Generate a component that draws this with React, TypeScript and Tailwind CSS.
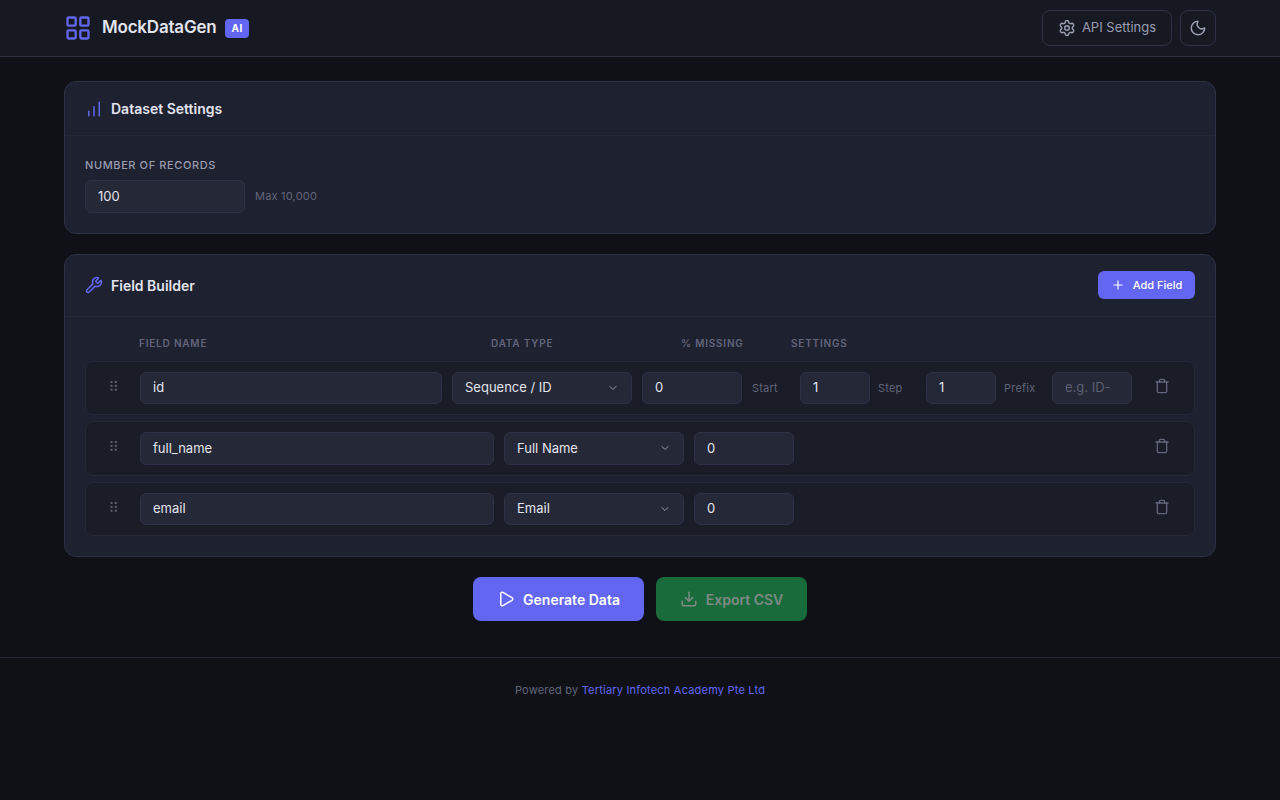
import { ChartNoAxesColumnIncreasing, ChevronDown, Download, LayoutGrid, Moon, Play, Plus, Settings, Trash, Wrench } from "lucide-react";

const inputCls =
  "h-[32.5px] rounded-[6px] border border-[#2e3145] bg-[#252836] px-3 text-[13px] text-[#e2e4ee] flex items-center";

const GripDots = () => (
  <svg width="8" height="10" viewBox="0 0 8 10" className="fill-[#5c5f70]">
    <rect x="0.5" y="0" width="2" height="2" />
    <rect x="4.8" y="0" width="2" height="2" />
    <rect x="0.5" y="3.9" width="2" height="2" />
    <rect x="4.8" y="3.9" width="2" height="2" />
    <rect x="0.5" y="7.8" width="2" height="2" />
    <rect x="4.8" y="7.8" width="2" height="2" />
  </svg>
);

const Setting = ({ label, value, placeholder, width }: { label: string; value?: string; placeholder?: string; width: string }) => (
  <div className="flex items-center gap-2">
    <span className="w-10 shrink-0 text-[11px] tracking-[0.2px] text-[#62657a]">{label}</span>
    <div className={`${inputCls} ${width} shrink-0`}>
      {value ?? <span className="text-[#5c5f70]">{placeholder}</span>}
    </div>
  </div>
);

const FieldRow = ({ name, type, settings }: { name: string; type: string; settings?: boolean }) => (
  <div className="flex items-center gap-[10px] rounded-[8px] border border-[#252836] bg-[#1a1c27] px-3 py-[10px]">
    <div className="flex w-8 shrink-0 -translate-y-[2px] justify-center">
      <GripDots />
    </div>
    <div className={`${inputCls} min-w-0 flex-1`}>{name}</div>
    <div className={`${inputCls} w-[180px] shrink-0 justify-between`}>
      {type}
      <ChevronDown size={12} className="text-[#9a9db0]" />
    </div>
    <div className={`${inputCls} w-[100px] shrink-0`}>0</div>
    <div className="flex flex-1 items-center gap-2">
      {settings && (
        <>
          <Setting label="Start" value="1" width="w-[70px]" />
          <Setting label="Step" value="1" width="w-[70px]" />
          <Setting label="Prefix" placeholder="e.g. ID-" width="w-20" />
        </>
      )}
    </div>
    <div className="flex w-10 shrink-0 -translate-y-[2px] justify-center">
      <Trash size={16} className="text-[#62657a]" />
    </div>
  </div>
);

export default function App() {
  return (
    <div className="flex min-h-[800px] flex-col bg-[#0f1117] font-['Inter',sans-serif] text-[#e2e4ee]">
      <header className="h-[57px] border-b border-[#2e3145] bg-[#161922]">
        <div className="mx-auto flex h-14 max-w-[1152px] items-center justify-between">
          <div className="flex items-center gap-[10px]">
            <LayoutGrid size={28} className="text-[#6366f1]" />
            <span className="text-[17px] font-semibold tracking-[-0.2px]">MockDataGen</span>
            <span className="ml-[-1px] rounded-[4px] bg-[#6366f1] px-[6px] py-[2px] text-[10px] font-bold tracking-[0.5px] text-white">AI</span>
          </div>
          <div className="flex items-center gap-2">
            <button className="flex h-9 w-[130px] items-center justify-center gap-[6px] rounded-[8px] border border-[#2e3145] text-[13px] text-[#9a9db0]">
              <Settings size={18} />
              API Settings
            </button>
            <button className="flex h-9 w-9 items-center justify-center rounded-[8px] border border-[#2e3145] text-[#9a9db0]">
              <Moon size={18} />
            </button>
          </div>
        </div>
      </header>

      <main className="mx-auto flex w-[1152px] flex-col gap-5 pt-6 pb-9">
        <section className="rounded-[12px] border border-[#2e3145] bg-[#1e2130]">
          <div className="flex h-[54px] items-center gap-2 border-b border-[#252836] px-5">
            <ChartNoAxesColumnIncreasing size={18} className="text-[#6366f1]" />
            <h2 className="text-[14px] font-semibold">Dataset Settings</h2>
          </div>
          <div className="p-5">
            <div className="mb-[6px] text-[11px] leading-[18px] font-medium tracking-[0.6px] text-[#9a9db0]">NUMBER OF RECORDS</div>
            <div className="flex items-center gap-[10px]">
              <div className={`${inputCls} w-40`}>100</div>
              <span className="text-[11px] tracking-[0.2px] text-[#62657a]">Max 10,000</span>
            </div>
          </div>
        </section>

        <section className="rounded-[12px] border border-[#2e3145] bg-[#1e2130]">
          <div className="flex h-[62px] items-center justify-between border-b border-[#252836] px-5">
            <div className="flex items-center gap-2">
              <Wrench size={18} className="text-[#6366f1]" />
              <h2 className="text-[14px] font-semibold">Field Builder</h2>
            </div>
            <button className="flex h-7 w-[97px] items-center justify-center gap-2 rounded-[6px] bg-[#6366f1] text-[11px] font-medium text-white">
              <Plus size={14} />
              Add Field
            </button>
          </div>
          <div className="p-5">
            <div className="mb-[10px] flex h-[14px] items-center gap-[10px] px-3 text-[10px] font-semibold tracking-[0.8px] text-[#62657a]">
              <div className="w-8 shrink-0" />
              <div className="flex-1">FIELD NAME</div>
              <div className="w-[180px] shrink-0">DATA TYPE</div>
              <div className="w-[100px] shrink-0">% MISSING</div>
              <div className="flex-1">SETTINGS</div>
              <div className="w-10 shrink-0" />
            </div>
            <div className="flex flex-col gap-[6px]">
              <FieldRow name="id" type="Sequence / ID" settings />
              <FieldRow name="full_name" type="Full Name" />
              <FieldRow name="email" type="Email" />
            </div>
          </div>
        </section>

        <div className="flex justify-center gap-3">
          <button className="flex h-11 w-[171px] items-center justify-center gap-2 rounded-[8px] bg-[#6366f1] text-[14px] font-semibold text-white">
            <Play size={18} />
            Generate Data
          </button>
          <button className="flex h-11 w-[151px] items-center justify-center gap-2 rounded-[8px] bg-[#1a6b3c] text-[14px] font-semibold text-[#7d8a84]">
            <Download size={18} />
            Export CSV
          </button>
        </div>
      </main>

      <footer className="border-t border-[#252836] pt-6 text-center text-[11px] tracking-[0.2px] text-[#62657a]">
        Powered by <span className="text-[#6366f1]">Tertiary Infotech Academy Pte Ltd</span>
      </footer>
    </div>
  );
}
